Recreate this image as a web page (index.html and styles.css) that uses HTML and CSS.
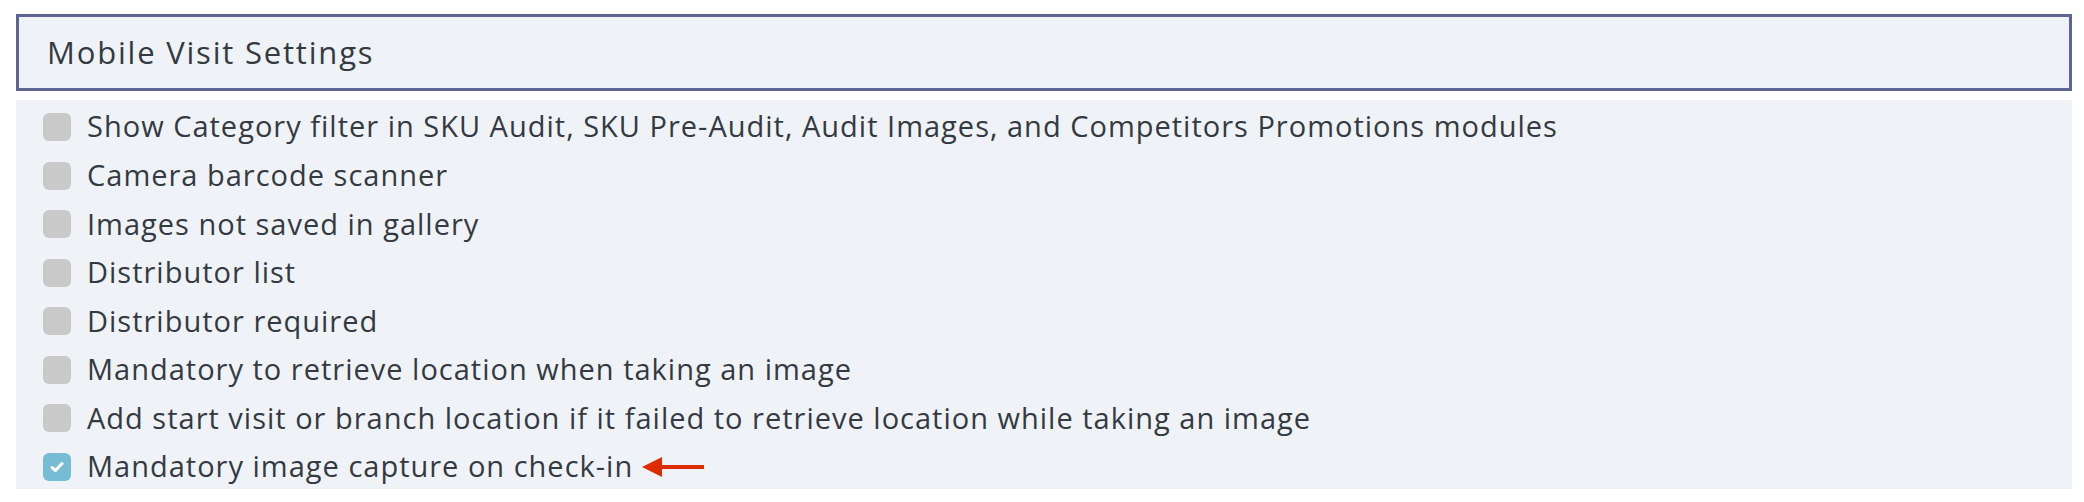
FILE: index.html
```html
<!DOCTYPE html>
<html>
<head>
<meta charset="utf-8">
<link rel="stylesheet" href="styles.css">
</head>
<body>
<div class="page">
  <div class="panel-header">Mobile Visit Settings</div>
  <div class="panel-body">
    <div class="row"><span class="box"></span><span class="label">Show Category filter in SKU Audit, SKU Pre-Audit, Audit Images, and Competitors Promotions modules</span></div>
    <div class="row"><span class="box"></span><span class="label">Camera barcode scanner</span></div>
    <div class="row"><span class="box"></span><span class="label">Images not saved in gallery</span></div>
    <div class="row"><span class="box"></span><span class="label">Distributor list</span></div>
    <div class="row"><span class="box"></span><span class="label">Distributor required</span></div>
    <div class="row"><span class="box"></span><span class="label">Mandatory to retrieve location when taking an image</span></div>
    <div class="row"><span class="box"></span><span class="label">Add start visit or branch location if it failed to retrieve location while taking an image</span></div>
    <div class="row"><span class="box checked"><svg width="14" height="12" viewBox="0 0 14 12"><path d="M2 6.5 L5.5 9.5 L12 2.5" fill="none" stroke="#fff" stroke-width="3" stroke-linecap="round" stroke-linejoin="round"/></svg></span><span class="label">Mandatory image capture on check-in</span><svg class="arrow" width="62" height="20" viewBox="0 0 62 20"><polygon points="0,10 20,0 20,20" fill="#dd2c00"/><rect x="18" y="8" width="44" height="4" fill="#dd2c00"/></svg></div>
  </div>
</div>
</body>
</html>
```

FILE: styles.css
```css
html, body {
  margin: 0;
  padding: 0;
  background: #ffffff;
}
body {
  font-family: "Open Sans", "Liberation Sans", sans-serif;
  color: #343a42;
}
.page {
  padding: 14px 12px 0 16px;
}
.panel-header {
  height: 77px;
  box-sizing: border-box;
  border: 3px solid #5e6592;
  background: #eff3f7;
  display: flex;
  align-items: center;
  padding-left: 28px;
  padding-bottom: 2px;
  font-size: 31px;
  letter-spacing: 1.8px;
}
.panel-body {
  margin-top: 9px;
  height: 389px;
  box-sizing: border-box;
  background: #eff3f7;
  padding: 2.7px 0 0 27px;
}
.row {
  height: 48.57px;
  display: flex;
  align-items: center;
}
.box {
  width: 28px;
  height: 28px;
  border-radius: 6px;
  background: #c9c9c9;
  flex: none;
  display: flex;
  align-items: center;
  justify-content: center;
}
.box.checked {
  background: #77bcd5;
}
.label {
  margin-left: 16px;
  font-size: 29px;
  letter-spacing: 1px;
  padding-bottom: 2px;
  white-space: nowrap;
}
.arrow {
  margin-left: 9px;
  flex: none;
}
```
